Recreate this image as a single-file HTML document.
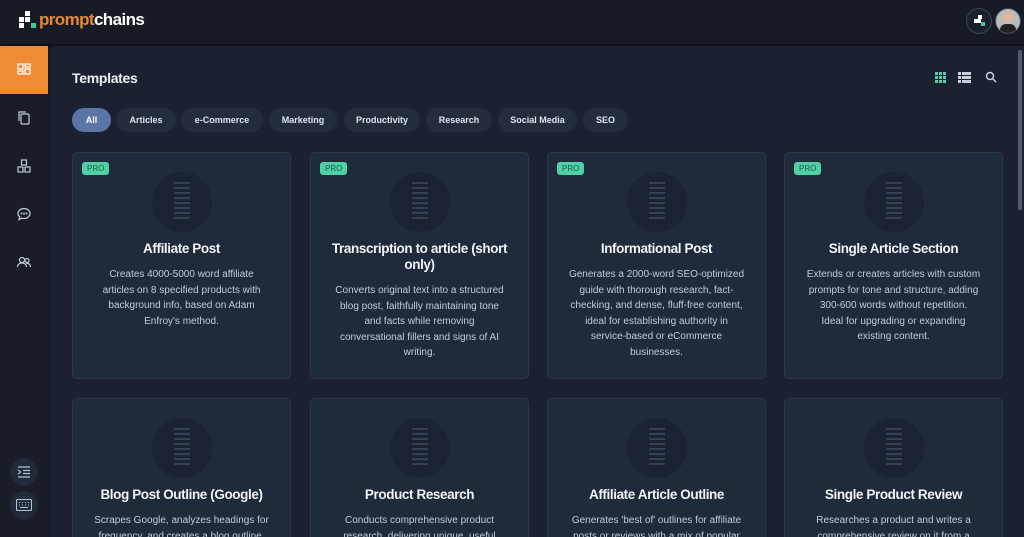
<!DOCTYPE html>
<html style="width:1024px;height:537px;overflow:hidden"><head><meta charset="utf-8"><style>
*{box-sizing:border-box;margin:0;padding:0}
body{width:1024px;height:537px;overflow:hidden;background:#151a24;font-family:"Liberation Sans",sans-serif;position:relative}
.top{position:absolute;left:0;top:0;width:1024px;height:44px;background:#161b25;box-shadow:0 2px 3px rgba(0,0,0,.4)}
.logo{position:absolute;left:19px;top:11px;width:17px;height:17px}
.logo i{position:absolute;width:5px;height:5px;background:#fff}
.brand{position:absolute;left:39px;top:10px;font-size:17px;font-weight:bold;letter-spacing:-0.6px;color:#fff}
.brand span{color:#e8892f}
.av{position:absolute;top:8px;width:26px;height:26px;border-radius:50%;border:1.5px solid #3a4556;background:#1a202c}
.side{position:absolute;left:0;top:46px;width:48px;height:491px;background:#181d28}
.act{position:absolute;left:0;top:46px;width:48px;height:48px;background:#ef8b33}
.main{position:absolute;left:50px;top:46px;width:974px;height:491px;background:#1b2130;border-top-left-radius:6px}
.sic{position:absolute;left:16px;width:16px;height:16px}
h1{position:absolute;left:72px;top:70px;color:#eef1f5;font-size:14px;font-weight:bold;letter-spacing:-0.3px}
.pill{position:absolute;top:108px;height:24px;border-radius:12px;background:#242d3e;color:#dfe4ec;font-size:9px;font-weight:bold;line-height:24px;text-align:center}
.card{position:absolute;width:219px;height:227px;background:#1f2a3b;border:1px solid #2c374a;border-radius:5px;text-align:center;overflow:hidden}
.r2{height:139px;border-bottom:none;border-radius:5px 5px 0 0}
.pro{position:absolute;left:9px;top:9px;background:#4fd1a5;color:#1d5a47;font-size:8px;padding:0 5px;height:13px;line-height:13px;border-radius:3px}
.circ{position:absolute;left:79px;top:19px;width:60px;height:60px;border-radius:50%;background:#1b2231}
.circ b{position:absolute;left:22px;top:10px;width:16px;height:40px;background:repeating-linear-gradient(#4b5d7a 0 2px,transparent 2px 5px);opacity:.5}
.card h3{position:absolute;left:0;right:0;top:88px;color:#f2f4f7;font-size:13.5px;letter-spacing:-0.4px;line-height:16px;padding:0 12px}
.card p{position:absolute;left:0;right:0;color:#c4ccd8;font-size:10px;line-height:15.5px;white-space:nowrap}
</style></head><body>
<div class="top">
<div class="logo"><i style="left:6px;top:0"></i><i style="left:0;top:6px"></i><i style="left:6px;top:6px"></i><i style="left:0;top:12px"></i><i style="left:12px;top:12px;background:#3cc9a0"></i></div>
<div class="brand"><span>prompt</span>chains</div>
<div class="av" style="left:966px"><div style="position:absolute;left:7px;top:6px;width:11px;height:11px;background:linear-gradient(#fff,#fff) 4px 0/4px 4px no-repeat,linear-gradient(#fff,#fff) 0 4px/7px 4px no-repeat,linear-gradient(#3cc9a0,#3cc9a0) 7px 7px/4px 4px no-repeat"></div></div>
<div class="av" style="left:995px;background:radial-gradient(circle at 50% 35%,#d9b9a3 0 5px,#bbb 6px);overflow:hidden"><div style="position:absolute;left:4px;top:15px;width:16px;height:12px;background:#222;border-radius:6px 6px 0 0"></div></div>
</div>
<div class="side"></div>
<div class="act"></div>
<svg class="sic" style="top:62px" viewBox="0 0 16 16" fill="none" stroke="#fff" stroke-width="1.3"><rect x="2" y="2" width="5" height="5"/><rect x="9" y="2" width="5" height="3"/><rect x="2" y="9" width="5" height="3"/><rect x="9" y="7" width="5" height="5"/></svg>
<svg class="sic" style="top:110px" viewBox="0 0 16 16" fill="none" stroke="#c5ccd6" stroke-width="1.2"><rect x="5" y="4" width="8" height="10" rx="1"/><path d="M3 11V2h7"/></svg>
<svg class="sic" style="top:158px" viewBox="0 0 16 16" fill="none" stroke="#c5ccd6" stroke-width="1.2"><rect x="5.5" y="2" width="5" height="5"/><rect x="2" y="9" width="5" height="5"/><rect x="9" y="9" width="5" height="5"/></svg>
<svg class="sic" style="top:206px" viewBox="0 0 16 16" fill="none" stroke="#c5ccd6" stroke-width="1.2"><path d="M8 2.5c3.3 0 6 2.2 6 5s-2.7 5-6 5c-.8 0-1.5-.1-2.2-.3L3 13.5l.8-2.6C2.7 10 2 8.8 2 7.5c0-2.8 2.7-5 6-5z"/><circle cx="5.5" cy="7.5" r=".4"/><circle cx="8" cy="7.5" r=".4"/><circle cx="10.5" cy="7.5" r=".4"/></svg>
<svg class="sic" style="top:254px" viewBox="0 0 16 16" fill="none" stroke="#c5ccd6" stroke-width="1.2"><circle cx="6" cy="6" r="2.5"/><circle cx="11" cy="6.5" r="2"/><path d="M1.5 13c0-2.5 2-4 4.5-4s4.5 1.5 4.5 4M10 9.3c2.5-.3 4.5 1 4.5 3.7"/></svg>
<div style="position:absolute;left:10px;top:458px;width:28px;height:28px;border-radius:50%;background:#212a39"></div>
<div style="position:absolute;left:10px;top:491px;width:28px;height:28px;border-radius:50%;background:#212a39"></div>
<svg style="position:absolute;left:17px;top:465px" width="14" height="14" viewBox="0 0 14 14" stroke="#b8c2d0" stroke-width="1.2"><path d="M1 2h12M6 5.5h7M6 8.5h7M1 12h12M1 5l2.5 2L1 9"/></svg>
<svg style="position:absolute;left:16px;top:499px" width="16" height="12" viewBox="0 0 16 12" fill="none" stroke="#b8c2d0" stroke-width="1.1"><rect x=".5" y=".5" width="15" height="11" rx="1"/><path d="M3 3.5h1M6 3.5h1M9 3.5h1M12 3.5h1M3 6h1M6 6h1M9 6h1M12 6h1M4 8.5h8"/></svg>
<div class="main"></div>
<div style="position:absolute;left:1018px;top:50px;width:4px;height:160px;background:#505b6c;border-radius:2px"></div>
<h1>Templates</h1>
<svg style="position:absolute;left:935px;top:72px" width="11" height="11" viewBox="0 0 11 11" fill="#4fd1a5"><rect x="0" y="0" width="3" height="3"/><rect x="4" y="0" width="3" height="3"/><rect x="8" y="0" width="3" height="3"/><rect x="0" y="4" width="3" height="3"/><rect x="4" y="4" width="3" height="3"/><rect x="8" y="4" width="3" height="3"/><rect x="0" y="8" width="3" height="3"/><rect x="4" y="8" width="3" height="3"/><rect x="8" y="8" width="3" height="3"/></svg>
<svg style="position:absolute;left:958px;top:72px" width="13" height="11" viewBox="0 0 13 11" fill="#c8d0da"><rect x="0" y="0" width="3" height="3"/><rect x="4" y="0" width="9" height="3"/><rect x="0" y="4" width="3" height="3"/><rect x="4" y="4" width="9" height="3"/><rect x="0" y="8" width="3" height="3"/><rect x="4" y="8" width="9" height="3"/></svg>
<svg style="position:absolute;left:985px;top:71px" width="12" height="12" viewBox="0 0 12 12" fill="none" stroke="#c8d0da" stroke-width="1.5"><circle cx="5" cy="5" r="3.5"/><path d="M7.5 7.5L11 11"/></svg>
<div class="pill" style="left:72px;width:39px;background:#5b76a6;color:#fff">All</div>
<div class="pill" style="left:116px;width:60px">Articles</div>
<div class="pill" style="left:181px;width:82px">e-Commerce</div>
<div class="pill" style="left:269px;width:68px">Marketing</div>
<div class="pill" style="left:344px;width:76px">Productivity</div>
<div class="pill" style="left:426px;width:66px">Research</div>
<div class="pill" style="left:498px;width:79px">Social Media</div>
<div class="pill" style="left:583px;width:45px">SEO</div>

<div class="card" style="left:72px;top:152px"><div class="pro">PRO</div><div class="circ"><b></b></div><h3>Affiliate Post</h3><p style="top:114px">Creates 4000-5000 word affiliate<br>articles on 8 specified products with<br>background info, based on Adam<br>Enfroy's method.</p></div>
<div class="card" style="left:310px;top:152px"><div class="pro">PRO</div><div class="circ"><b></b></div><h3>Transcription to article (short<br>only)</h3><p style="top:130px">Converts original text into a structured<br>blog post, faithfully maintaining tone<br>and facts while removing<br>conversational fillers and signs of AI<br>writing.</p></div>
<div class="card" style="left:547px;top:152px"><div class="pro">PRO</div><div class="circ"><b></b></div><h3>Informational Post</h3><p style="top:114px">Generates a 2000-word SEO-optimized<br>guide with thorough research, fact-<br>checking, and dense, fluff-free content,<br>ideal for establishing authority in<br>service-based or eCommerce<br>businesses.</p></div>
<div class="card" style="left:784px;top:152px"><div class="pro">PRO</div><div class="circ"><b></b></div><h3>Single Article Section</h3><p style="top:114px">Extends or creates articles with custom<br>prompts for tone and structure, adding<br>300-600 words without repetition.<br>Ideal for upgrading or expanding<br>existing content.</p></div>

<div class="card r2" style="left:72px;top:398px"><div class="circ"><b></b></div><h3>Blog Post Outline (Google)</h3><p style="top:114px">Scrapes Google, analyzes headings for<br>frequency, and creates a blog outline.</p></div>
<div class="card r2" style="left:310px;top:398px"><div class="circ"><b></b></div><h3>Product Research</h3><p style="top:114px">Conducts comprehensive product<br>research, delivering unique, useful</p></div>
<div class="card r2" style="left:547px;top:398px"><div class="circ"><b></b></div><h3>Affiliate Article Outline</h3><p style="top:114px">Generates 'best of' outlines for affiliate<br>posts or reviews with a mix of popular</p></div>
<div class="card r2" style="left:784px;top:398px"><div class="circ"><b></b></div><h3>Single Product Review</h3><p style="top:114px">Researches a product and writes a<br>comprehensive review on it from a</p></div>
</body></html>
